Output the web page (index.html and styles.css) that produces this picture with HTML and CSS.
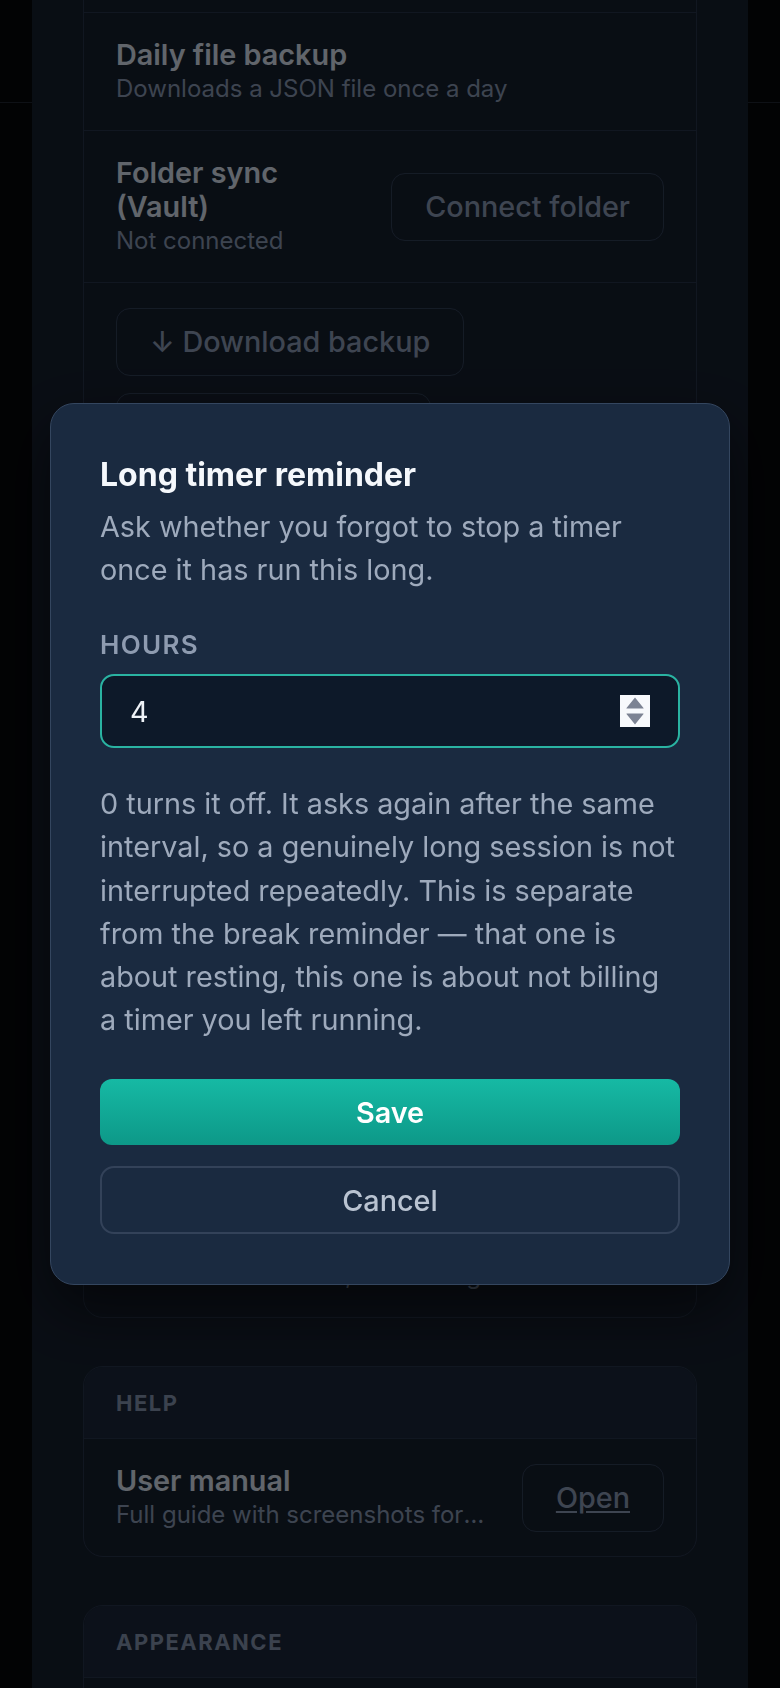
FILE: index.html
```html
<!DOCTYPE html>
<html lang="en">
<head>
<meta charset="utf-8">
<title>Settings – Long timer reminder</title>
<link rel="stylesheet" href="styles.css">
</head>
<body>
<main class="app">
  <section class="card card--continued">
    <div class="row row--tail"></div>
    <div class="row">
      <div class="row-text">
        <div class="row-title">Daily file backup</div>
        <div class="row-sub">Downloads a JSON file once a day</div>
      </div>
    </div>
    <div class="row">
      <div class="row-text">
        <div class="row-title">Folder sync (Vault)</div>
        <div class="row-sub">Not connected</div>
      </div>
      <button class="btn" type="button">Connect folder</button>
    </div>
    <div class="row row--actions">
      <button class="btn" type="button">↓ Download backup</button>
      <button class="btn" type="button">↑ Restore backup</button>
    </div>
  </section>

  <section class="card">
    <h2 class="card-head">Timer</h2>
    <div class="row">
      <div class="row-text">
        <div class="row-title">Break reminder</div>
        <div class="row-sub">Every 90 minutes</div>
      </div>
    </div>
    <div class="row">
      <div class="row-text">
        <div class="row-title">Long timer reminder</div>
        <div class="row-sub">After 4 hours</div>
      </div>
    </div>
    <div class="row">
      <div class="row-text">
        <div class="row-title">Rounding</div>
        <div class="row-sub">Round entries to 15 minutes</div>
      </div>
    </div>
  </section>

  <section class="card">
    <h2 class="card-head">Invoices</h2>
    <div class="row">
      <div class="row-text">
        <div class="row-title">Default hourly rate</div>
        <div class="row-sub">Used for new clients</div>
      </div>
    </div>
    <div class="row">
      <div class="row-text">
        <div class="row-title">Business details</div>
        <div class="row-sub row-sub--truncate">Your business name, numbering, payment details and tax ID</div>
      </div>
      <button class="btn btn--compact" type="button">Edit</button>
    </div>
  </section>

  <section class="card">
    <h2 class="card-head">Help</h2>
    <div class="row">
      <div class="row-text">
        <div class="row-title">User manual</div>
        <div class="row-sub row-sub--truncate">Full guide with screenshots for every feature</div>
      </div>
      <a class="btn btn--link" href="#manual">Open</a>
    </div>
  </section>

  <section class="card">
    <h2 class="card-head">Appearance</h2>
    <div class="row">
      <div class="row-text">
        <div class="row-title">Theme</div>
        <div class="row-sub">Dark</div>
      </div>
    </div>
  </section>
</main>

<div class="overlay">
  <div class="modal" role="dialog" aria-labelledby="modal-title">
    <h3 class="modal-title" id="modal-title">Long timer reminder</h3>
    <p class="modal-desc">Ask whether you forgot to stop a timer once it has run this long.</p>
    <label class="field-label" for="hours">Hours</label>
    <div class="field" id="hours">
      <span class="field-value">4</span>
      <svg class="spinner" width="30" height="32" viewBox="0 0 30 32" aria-hidden="true">
        <rect width="30" height="32" fill="#f7f9fc"/>
        <path d="M15 2.5 L23.5 13 Q24 13.6 23 13.6 L7 13.6 Q6 13.6 6.5 13 Z" fill="#7c8393"/>
        <path d="M15 29.5 L23.5 19 Q24 18.4 23 18.4 L7 18.4 Q6 18.4 6.5 19 Z" fill="#7c8393"/>
      </svg>
    </div>
    <p class="modal-help">0 turns it off. It asks again after the same interval, so a genuinely long session is not interrupted repeatedly. This is separate from the break reminder — that one is about resting, this one is about not billing a timer you left running.</p>
    <button class="btn-primary" type="button">Save</button>
    <button class="btn-secondary" type="button">Cancel</button>
  </div>
</div>
</body>
</html>
```

FILE: styles.css
```css
html, body {
  height: 100%;
  overflow: hidden;
}

body {
  margin: 0;
  font-family: Inter, "Noto Sans", "Liberation Sans", sans-serif;
  background-color: #05070a;
  background-image: linear-gradient(to bottom, transparent 102px, #1f2731 102px, #1f2731 103px, transparent 103px);
  background-repeat: no-repeat;
  -webkit-font-smoothing: antialiased;
}

.app {
  box-sizing: border-box;
  max-width: 716px;
  min-height: 100%;
  margin: 0 auto;
  padding: 0 51px 60px;
  background: #161f2e;
}

/* ---------- cards & rows ---------- */
.card {
  border: 1px solid #27344a;
  border-radius: 20px;
  overflow: hidden;
}

.card + .card {
  margin-top: 48px;
}

.card--continued {
  border-top: 0;
  border-top-left-radius: 0;
  border-top-right-radius: 0;
}

.card-head {
  margin: 0;
  height: 71px;
  display: flex;
  align-items: center;
  padding: 0 32px;
  background: #1b273a;
  border-bottom: 1px solid #27344a;
  font-size: 22px;
  font-weight: 700;
  letter-spacing: 1.5px;
  text-transform: uppercase;
  color: #8393ad;
}

.row {
  display: flex;
  align-items: center;
  gap: 36px;
  padding: 25px 32px 24px;
}

.row + .row {
  border-top: 1px solid #27344a;
}

.row--tail {
  height: 12px;
  padding: 0;
}

.row--actions {
  flex-direction: column;
  align-items: flex-start;
  gap: 17px;
}

.row-text {
  flex: 1;
  min-width: 0;
}

.row-title {
  font-size: 28.8px;
  line-height: 34px;
  font-weight: 600;
  color: #d8e1ee;
}

.row-sub {
  font-size: 24px;
  line-height: 34px;
  color: #8798b2;
}

.row-sub--truncate {
  white-space: nowrap;
  overflow: hidden;
  text-overflow: ellipsis;
}

.btn {
  flex: none;
  box-sizing: border-box;
  display: inline-block;
  padding: 15px 33px;
  border: 1px solid #303f56;
  border-radius: 14px;
  background: transparent;
  font-family: inherit;
  font-size: 28.8px;
  line-height: 36px;
  font-weight: 500;
  color: #8a9ab4;
  text-decoration: none;
  cursor: pointer;
}

.btn--compact {
  padding-top: 5px;
  padding-bottom: 5px;
}

.btn--link {
  text-decoration: underline;
  text-underline-offset: 3px;
}

/* ---------- dialog ---------- */
.overlay {
  position: fixed;
  inset: 0;
  display: flex;
  align-items: center;
  justify-content: center;
  padding: 0 50px;
  background: rgba(0, 0, 0, 0.55);
}

.modal {
  box-sizing: border-box;
  width: 100%;
  padding: 49px 49px 50px;
  background: #1a2a40;
  border: 1px solid #34465f;
  border-radius: 24px;
  box-shadow: 0 24px 60px rgba(0, 0, 0, 0.55);
}

.modal-title {
  margin: 0;
  font-size: 32px;
  line-height: 44px;
  font-weight: 700;
  color: #f5f8fc;
}

.modal-desc,
.modal-help {
  margin: 8px 0 0;
  font-size: 28.8px;
  line-height: 1.5;
  color: #9eaabc;
}

.modal-help {
  margin-top: 34px;
}

.field-label {
  display: block;
  margin-top: 36px;
  font-size: 26px;
  line-height: 36px;
  font-weight: 600;
  letter-spacing: 1.3px;
  text-transform: uppercase;
  color: #8e9bb0;
}

.field {
  box-sizing: border-box;
  height: 74px;
  margin-top: 11px;
  display: flex;
  align-items: center;
  justify-content: space-between;
  padding: 0 28px;
  background: #0d1929;
  border: 2px solid #2ab3a2;
  border-radius: 14px;
}

.field-value {
  font-size: 28.8px;
  color: #eef2f7;
}

.spinner {
  display: block;
}

.btn-primary,
.btn-secondary {
  display: block;
  box-sizing: border-box;
  width: 100%;
  font-family: inherit;
  font-size: 28.8px;
  cursor: pointer;
}

.btn-primary {
  height: 66px;
  margin-top: 38px;
  border: 0;
  border-radius: 12px;
  background: linear-gradient(to bottom, #16b9a4, #0d9888);
  font-weight: 600;
  color: #ffffff;
}

.btn-secondary {
  height: 68px;
  margin-top: 21px;
  border: 2px solid #334259;
  border-radius: 14px;
  background: transparent;
  font-weight: 500;
  color: #b9c3d1;
}
```
